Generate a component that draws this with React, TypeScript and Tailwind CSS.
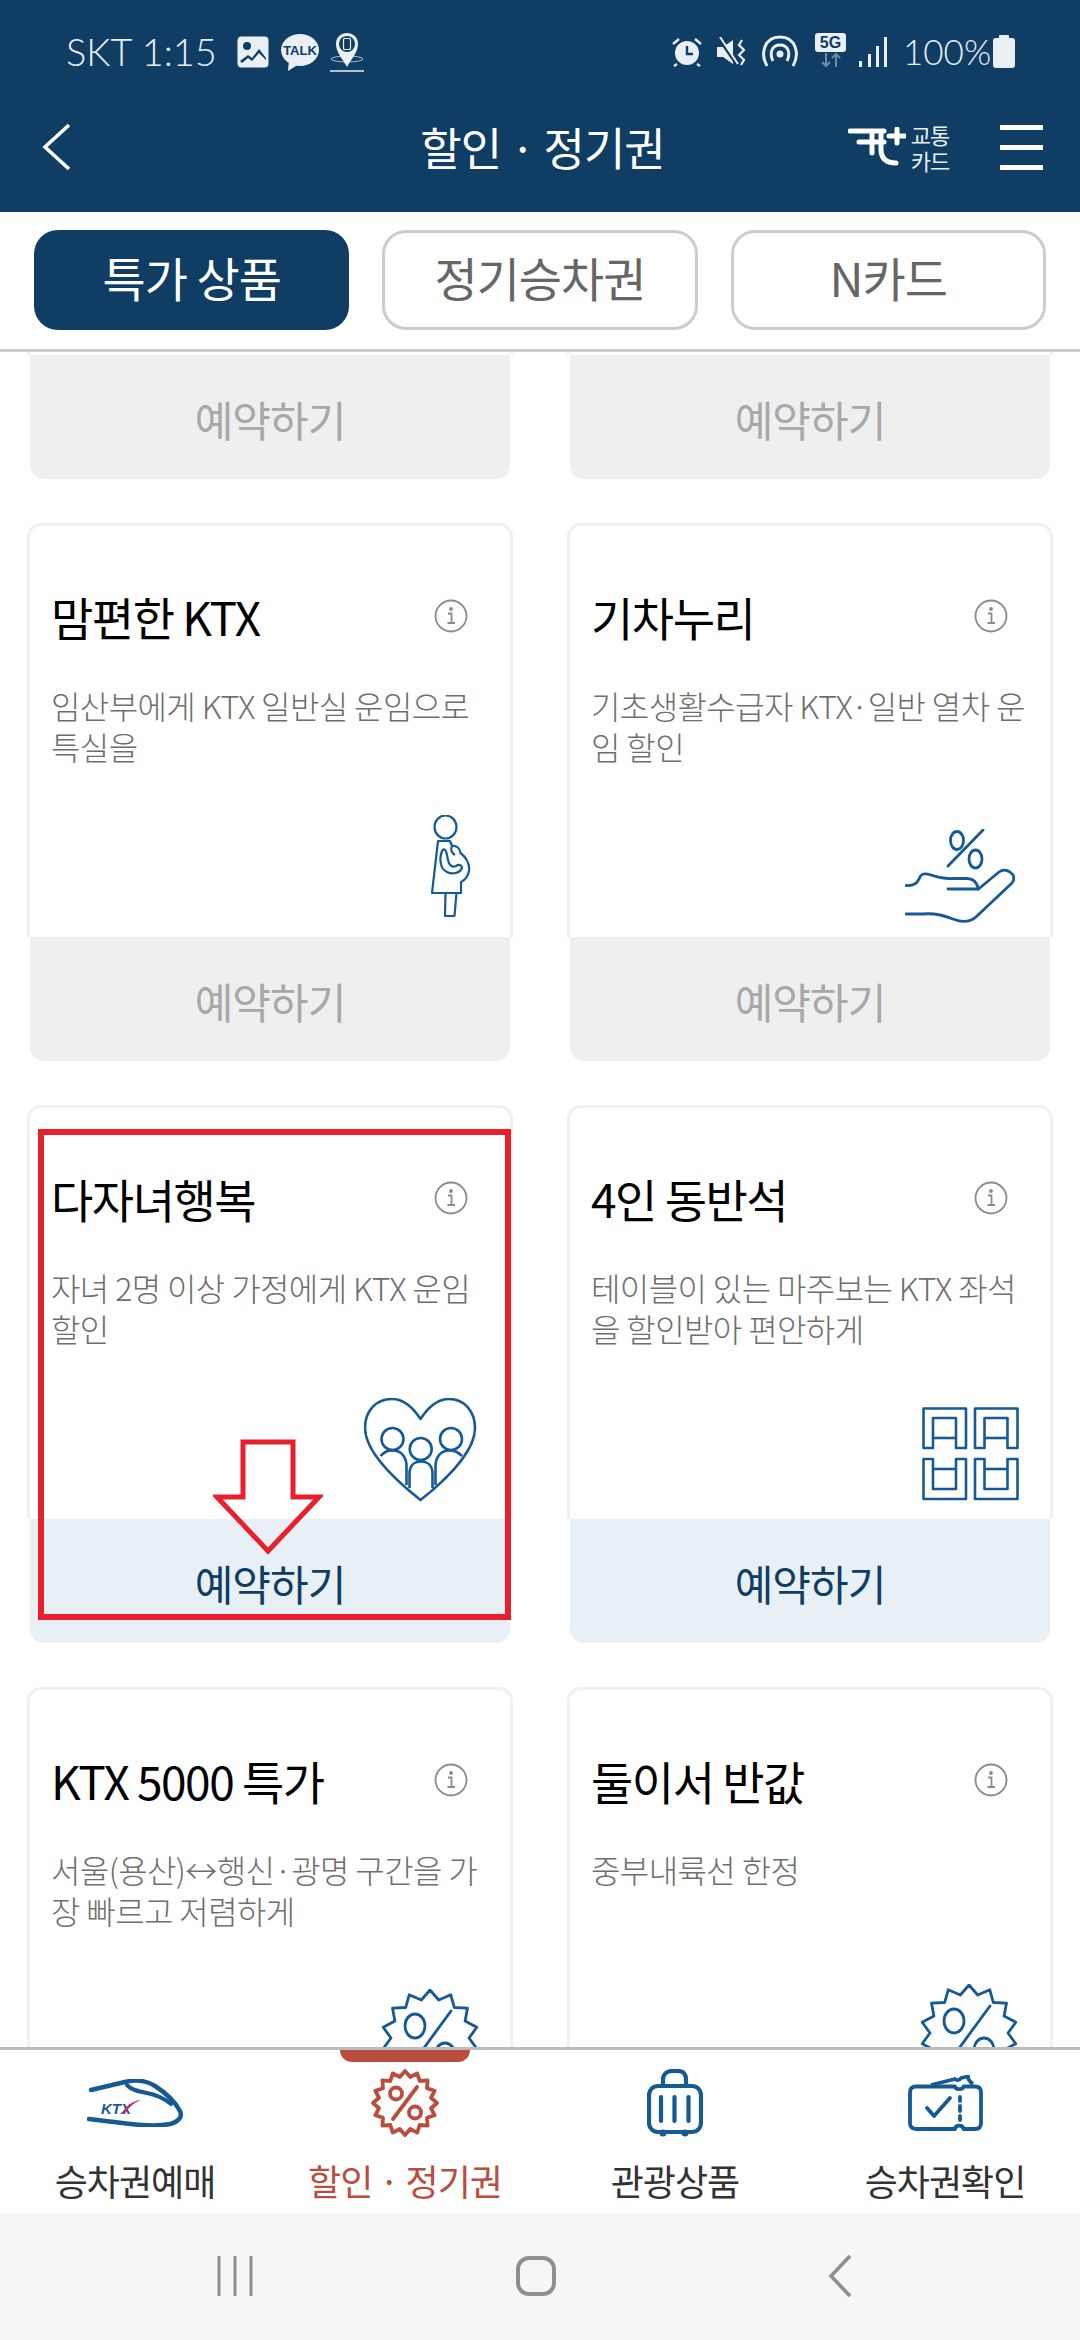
import React from 'react';

const KR = "font-['Noto_Sans_CJK_KR','Noto_Sans',sans-serif]";
const BLUE = '#155a94';

// star outline used by the discount badges
const starPoints = (n: number, cx: number, cy: number, r1: number, r2: number) =>
  Array.from({ length: n * 2 })
    .map((_, i) => {
      const r = i % 2 === 0 ? r1 : r2;
      const a = (Math.PI * i) / n - Math.PI / 2;
      return `${(cx + r * Math.cos(a)).toFixed(1)},${(cy + r * Math.sin(a)).toFixed(1)}`;
    })
    .join(' ');

const Pregnant = () => (
  <svg width="40" height="102" viewBox="0 0 40 102" fill="none" stroke={BLUE} strokeWidth="2.2" strokeLinejoin="round">
    <ellipse cx="14.5" cy="12" rx="11" ry="11.5" />
    <path d="M7 26H19L21 31C25 30 29 33 29.5 38C35 42 39 49 38 56C37 61 34 65 30 67V78H1Z" />
    <path d="M14 101H23.5L25.5 78H14.5Z" />
    <path d="M11 36C8 44 9 54 16 57C22 60 29 58 31 53C31 50 28 49 25 51C21 53 18 50 17 45C16 41 16 37 14 35C13 34 12 34 11 36Z" />
    <path d="M21 31C19 35 21 38 24 40" />
  </svg>
);

const HandPercent = () => (
  <svg width="110" height="94" viewBox="0 0 110 94" fill="none" stroke={BLUE} strokeWidth="2.8" strokeLinecap="round" strokeLinejoin="round">
    <ellipse cx="52" cy="11.5" rx="6.5" ry="9" />
    <ellipse cx="70.5" cy="30" rx="6.5" ry="9" />
    <path d="M78 1L43 37" />
    <path d="M1 56.5C8 57 12 55 14 50C16 44 20 44 26 46C34 49 40 50 48 49.5H62C68 49.5 72 54 73.5 60H43" />
    <path d="M73.5 60L94 43C98 40 102 41 105 43C109 46 110 50 107 54L72 87C66 93 58 94 48 90C38 86 28 84 18 85H1" />
  </svg>
);

const FamilyHeart = () => (
  <svg width="113" height="104" viewBox="0 0 113 104" fill="none" stroke={BLUE} strokeWidth="2.6" strokeLinejoin="round">
    <path d="M56.5 21C48 8 38 1 28 1C12 1 1 13 1 30C1 55 35 85 56.5 102C78 85 111 55 111 30C111 13 100 1 85 1C75 1 65 8 56.5 21Z" />
    <circle cx="28.5" cy="41" r="11" />
    <circle cx="87" cy="41" r="11" />
    <circle cx="56.7" cy="51" r="11" />
    <path d="M16.5 58C20 54 25 52 30 52.5C38 53 42.5 60 42.5 68V87" />
    <path d="M98 58C94 54 89 52 84 52.5C76 53 71.5 60 71.5 68V87" />
    <path d="M45.5 90V76C45.5 68 50 63.5 57 63.5C64 63.5 68.5 68 68.5 76V90" />
  </svg>
);

const Seats = () => (
  <svg width="97" height="94" viewBox="0 0 97 94" fill="none" stroke={BLUE} strokeWidth="2.6" strokeLinejoin="round">
    <path d="M1.5 1.5H44V41H34V11H11V41H1.5Z" />
    <path d="M11 31H34" />
    <path d="M53 1.5H95.5V41H85.5V11H62.5V41H53Z" />
    <path d="M62.5 31H85.5" />
    <path d="M1.5 52H11V82H34V52H44V92H1.5Z" />
    <path d="M11 62H34" />
    <path d="M53 52H62.5V82H85.5V52H95.5V92H53Z" />
    <path d="M62.5 62H85.5" />
  </svg>
);

const CardBadge = () => (
  <svg width="98" height="98" viewBox="0 0 98 98" fill="none" stroke={BLUE} strokeWidth="2.8" strokeLinejoin="round">
    <polygon points={starPoints(14, 49, 49, 48, 39)} />
    <ellipse cx="34" cy="37" rx="10" ry="12" />
    <ellipse cx="64" cy="66" rx="10" ry="12" />
    <path d="M70 22L29 78" strokeLinecap="round" />
  </svg>
);

const InfoIcon = () => (
  <svg width="34" height="34" viewBox="0 0 34 34" fill="none" stroke="#8a8a8a" strokeWidth="1.8">
    <circle cx="17" cy="17" r="15.5" />
    <path d="M14 14.5H17.5V24M13.5 24H21" />
    <circle cx="17" cy="10" r="1" fill="#8a8a8a" />
  </svg>
);

const TrainIcon = () => (
  <svg width="97" height="48" viewBox="0 0 97 48" fill="none">
    <path d="M4 11L40 2.5C50 0.5 60 2 68 7C79 14 88 23 93 32C96 38 91 43 83 45C70 47.5 50 46 35 44L2 40" stroke={BLUE} strokeWidth="4.5" strokeLinecap="round" strokeLinejoin="round" />
    <path d="M40 6C44 11 52 12.5 60 14C70 16 78 20 84 25" stroke={BLUE} strokeWidth="4" strokeLinecap="round" />
    <text x="14" y="35" fontFamily="'Liberation Sans',sans-serif" fontSize="15" fontWeight="700" fontStyle="italic" fill={BLUE}>KTX</text>
    <path d="M36 35C38 28 44 22 54 21C46 24 41 29 38 35Z" fill="#c0277f" />
  </svg>
);

const NavBadge = () => (
  <svg width="68" height="68" viewBox="0 0 68 68" fill="none" stroke="#b94d3e" strokeWidth="3.8" strokeLinejoin="round">
    <polygon points={starPoints(16, 34, 34, 32, 26.5)} />
    <circle cx="25" cy="24.5" r="6" />
    <circle cx="44" cy="43.5" r="6" />
    <path d="M46 18L22 50" strokeLinecap="round" />
  </svg>
);

const SuitcaseIcon = () => (
  <svg width="56" height="68" viewBox="0 0 56 68" fill="none" stroke={BLUE} strokeWidth="4.2">
    <path d="M16 16V11C16 5 20 2 25 2H31C36 2 39 5 39 11V16" />
    <rect x="2" y="17" width="52" height="46" rx="9" />
    <path d="M14 28V52M27.5 28V52M41.5 28V52" strokeLinecap="round" />
    <circle cx="16" cy="64" r="3.5" fill={BLUE} stroke="none" />
    <circle cx="38" cy="64" r="3.5" fill={BLUE} stroke="none" />
  </svg>
);

const TicketIcon = () => (
  <svg width="75" height="57" viewBox="0 0 75 57" fill="none" stroke={BLUE} strokeWidth="3.8" strokeLinejoin="round">
    <path d="M8 11.5H47C47.5 15 55 15 55.5 11.5H67C71 11.5 73 13.5 73 17.5V48C73 52 71 54 67 54H55.5C55 49.5 47.5 49.5 47 54H8C4 54 2 52 2 48V17.5C2 13.5 4 11.5 8 11.5Z" />
    <path d="M23 10L47 4C49 6 52 5 53 3L60 1.5C60 4 62 7 65 9" />
    <path d="M52 22V26M52 31V36M52 41V45" strokeLinecap="round" />
    <path d="M19 33L26 41L42 23" strokeLinecap="round" />
  </svg>
);

const Card = ({ title, lines, active, icon, iconClass, noButton, children }: {
  title?: string;
  lines?: string[];
  active?: boolean;
  icon?: React.ReactNode;
  iconClass?: string;
  noButton?: boolean; // last row sits under the bottom nav
  children?: React.ReactNode;
}) => (
  <div className="relative">
    <div className="h-[414px] flex flex-col bg-white border-x-[3px] border-t-[3px] border-[#f0f0f0] rounded-t-[14px] pl-[21px] pr-[42px] pt-[62px]">
      {title && (
        <div className="flex justify-between items-center h-[56px]">
          <span className="text-[#000] text-[46px] tracking-[-1.5px] whitespace-nowrap">{title}</span>
          <InfoIcon />
        </div>
      )}
      {lines && (
        <div className="mt-[41px] text-[#6e6e6e] text-[32px] font-light leading-[41px] tracking-[-0.6px] whitespace-nowrap">
          {lines.map(l => <div key={l}>{l}</div>)}
        </div>
      )}
      {icon && <div className={`mt-auto self-end ${iconClass}`}>{icon}</div>}
    </div>
    {!noButton && (
      <div className={`h-[124px] mx-[3px] pt-[3px] rounded-b-[14px] flex items-center justify-center text-[42px] tracking-[-1px] ${active ? 'bg-[#e9f0f5] text-[#0f3d63]' : 'bg-[#efefef] text-[#a8a8a8]'}`}>
        예약하기
      </div>
    )}
    {children}
  </div>
);

const NavItem = ({ label, active, icon }: { label: string; active?: boolean; icon: React.ReactNode }) => (
  <div className="relative flex flex-col items-center">
    {active && <div className="absolute top-0 w-[130px] h-[12px] bg-[#b94d3e] rounded-b-[12px]" />}
    <div className="h-[90px] mt-[8px] flex items-center justify-center">{icon}</div>
    <span className={`mt-[7px] text-[36px] leading-[50px] tracking-[-1px] whitespace-nowrap ${active ? 'text-[#b94d3e]' : 'text-[#333]'}`}>{label}</span>
  </div>
);

export default function App() {
  return (
    <div className={`w-[1080px] h-[2340px] flex flex-col overflow-hidden bg-white ${KR}`}>
      {/* App header with status bar */}
      <header className="h-[212px] shrink-0 bg-[#0f3d63] text-[#e9eff5] flex flex-col">
        <div className="h-[104px] pl-[66px] pr-[65px] pt-[31px] flex justify-between">
          <div className="flex items-start">
            <span className="font-['Lato',sans-serif] font-light text-[38px] leading-[40px] w-[171px] whitespace-nowrap">SKT 1:15</span>
            <svg width="32" height="32" viewBox="0 0 32 32" className="mt-[5px]">
              <rect width="31" height="31" x="0.5" y="0.5" rx="4" fill="#e9eff5" />
              <circle cx="10" cy="10" r="4" fill="#0f3d63" />
              <path d="M3 25L11 19L15 22L22 13L29 22V24L22 17L15 25L11 22L5 27Z" fill="#0f3d63" />
            </svg>
            <svg width="38" height="38" viewBox="0 0 38 38" className="ml-[12px] mt-[3px]">
              <ellipse cx="19" cy="16" rx="19" ry="16" fill="#e9eff5" />
              <path d="M8 26L7 37L18 30Z" fill="#e9eff5" />
              <text x="19" y="21" textAnchor="middle" fontSize="13" fontWeight="700" fontFamily="'Liberation Sans',sans-serif" fill="#0f3d63">TALK</text>
            </svg>
            <svg width="36" height="40" viewBox="0 0 36 40" className="ml-[10px] mt-[1px]">
              <path d="M18 35C13 26 7 20 7 12C7 5 12 1 18 1C24 1 29 5 29 12C29 20 23 26 18 35Z" fill="#e9eff5" />
              <circle cx="18" cy="12" r="8" fill="#0f3d63" />
              <rect x="14.5" y="6.5" width="7" height="11" rx="1" fill="none" stroke="#e9eff5" strokeWidth="1.2" />
              <ellipse cx="18" cy="27" rx="16" ry="3" fill="none" stroke="#e9eff5" strokeWidth="1" opacity="0.7" />
              <path d="M1 39H35" stroke="#e9eff5" strokeWidth="1.6" />
            </svg>
          </div>
          <div className="flex items-start">
            <svg width="30" height="30" viewBox="0 0 30 30" className="mt-[6px]">
              <circle cx="15" cy="16" r="12" fill="#e9eff5" />
              <path d="M15 9V17H21" stroke="#0f3d63" strokeWidth="2.4" fill="none" />
              <path d="M1 7L7 2M29 7L23 2M5 27L2 29M25 27L28 29" stroke="#e9eff5" strokeWidth="2.4" />
            </svg>
            <svg width="30" height="30" viewBox="0 0 30 30" className="ml-[15px] mt-[6px]">
              <path d="M0 10H6L16 3V27L6 20H0Z" fill="#e9eff5" />
              <path d="M2 2L20 28" stroke="#0f3d63" strokeWidth="3" />
              <path d="M3 0L21 27" stroke="#e9eff5" strokeWidth="2" />
              <path d="M25 3L22 8L27 13L22 18L27 23L24 28" stroke="#e9eff5" strokeWidth="2.2" fill="none" />
            </svg>
            <svg width="38" height="32" viewBox="0 0 38 32" className="ml-[14px] mt-[4px]" fill="none" stroke="#e9eff5" strokeWidth="3">
              <path d="M6 31C-1 19 3 2 19 2C35 2 39 19 32 31" />
              <path d="M12 26C8 18 11 10 19 10C27 10 30 18 26 26" />
              <circle cx="19" cy="19" r="3.5" fill="#e9eff5" stroke="none" />
            </svg>
            <div className="ml-[16px] mt-[2px] w-[31px] flex flex-col items-center">
              <div className="w-[31px] h-[19px] rounded-[3px] bg-[#e9eff5] text-[#0f3d63] text-[16px] leading-[19px] font-bold text-center font-['Liberation_Sans',sans-serif]">5G</div>
              <svg width="24" height="16" viewBox="0 0 24 16" fill="none" stroke="#6f8ba3" strokeWidth="2">
                <path d="M7 1V14M3 10L7 14L11 10M17 15V2M13 6L17 2L21 6" />
              </svg>
            </div>
            <svg width="29" height="30" viewBox="0 0 29 30" className="ml-[13px] mt-[6px]" fill="#e9eff5">
              <rect x="0" y="24" width="3" height="6" />
              <rect x="9" y="17" width="3" height="13" />
              <rect x="17" y="9" width="3" height="21" />
              <rect x="25" y="0" width="3" height="30" />
            </svg>
            <span className="ml-[15px] font-['Lato',sans-serif] font-light text-[35px] leading-[40px] w-[90px] whitespace-nowrap">100%</span>
            <svg width="22" height="33" viewBox="0 0 22 33" className="mt-[4px]" fill="#e9eff5">
              <rect x="6" y="0" width="10" height="4" rx="1" />
              <rect x="0" y="3" width="22" height="30" rx="3" />
            </svg>
          </div>
        </div>
        <div className="flex-1 pl-[42px] pr-[37px] pb-[22px] grid grid-cols-[1fr_auto_1fr] items-center">
          <svg width="30" height="48" viewBox="0 0 30 48" fill="none" stroke="#fff" strokeWidth="3.6">
            <path d="M27 2L3 24L27 46" />
          </svg>
          <h1 className="text-white text-[45px] tracking-[-1px] whitespace-nowrap">할인 · 정기권</h1>
          <div className="flex items-center justify-end">
            <svg width="58" height="40" viewBox="0 0 58 40" fill="none" stroke="#fff" strokeWidth="5" strokeLinecap="round">
              <path d="M2 4H36M11 15H36M24 5V26M33 5V22C33 31 38 36 48 36" />
              <path d="M41 9H57M49 2V16" />
            </svg>
            <div className="ml-[1px] w-[46px] text-[22px] leading-[26px] tracking-[-1px] text-center text-[#e9eff5]">
              <div>교통</div>
              <div>카드</div>
            </div>
            <div className="ml-[47px] w-[43px] flex flex-col gap-[15px]">
              <div className="h-[5px] bg-white" />
              <div className="h-[5px] bg-white" />
              <div className="h-[5px] bg-white" />
            </div>
          </div>
        </div>
      </header>

      {/* Tabs */}
      <div className="h-[140px] shrink-0 border-b-[3px] border-[#cccccc] grid grid-cols-3 gap-x-[33px] px-[34px] pt-[18px]">
        <div className="h-[100px] pb-[5px] rounded-[24px] bg-[#0f3d63] text-white text-[47px] tracking-[-1px] flex items-center justify-center">특가 상품</div>
        <div className="h-[100px] pb-[5px] rounded-[24px] border-[3px] border-[#cccccc] text-[#666] text-[47px] tracking-[-1px] flex items-center justify-center">정기승차권</div>
        <div className="h-[100px] pb-[5px] rounded-[24px] border-[3px] border-[#cccccc] text-[#666] text-[47px] tracking-[-1px] flex items-center justify-center">N카드</div>
      </div>

      {/* Product list, scrolled */}
      <div className="flex-1 min-h-0 overflow-hidden">
        <div className="-mt-[411px] grid grid-cols-[486px_486px] gap-x-[54px] gap-y-[44px] pl-[27px]">
          <Card />
          <Card />
          <Card title="맘편한 KTX" lines={['임산부에게 KTX 일반실 운임으로', '특실을']} icon={<Pregnant />} iconClass="mb-[20px] -mr-[3px]" />
          <Card title="기차누리" lines={['기초생활수급자 KTX·일반 열차 운', '임 할인']} icon={<HandPercent />} iconClass="mb-[14px] -mr-[7px]" />
          <Card title="다자녀행복" lines={['자녀 2명 이상 가정에게 KTX 운임', '할인']} active icon={<FamilyHeart />} iconClass="mb-[17px] -mr-[9px]">
            <div className="absolute left-[11px] top-[24px] w-[473px] h-[491px] border-[6px] border-[#e8202e]" />
            <svg width="110" height="116" viewBox="0 0 110 116" fill="none" stroke="#e8202e" strokeWidth="5" className="absolute left-[186px] top-[334px]">
              <path d="M30 3H80V58H106L55 112L4 58H30Z" />
            </svg>
          </Card>
          <Card title="4인 동반석" lines={['테이블이 있는 마주보는 KTX 좌석', '을 할인받아 편안하게']} active icon={<Seats />} iconClass="mb-[18px] -mr-[11px]" />
          <Card title="KTX 5000 특가" lines={['서울(용산)↔행신·광명 구간을 가', '장 빠르고 저렴하게']} noButton icon={<CardBadge />} iconClass="mb-[14px] -mr-[11px]" />
          <Card title="둘이서 반값" lines={['중부내륙선 한정']} noButton icon={<CardBadge />} iconClass="mb-[19px] -mr-[10px]" />
        </div>
      </div>

      {/* Bottom navigation */}
      <nav className="h-[167px] shrink-0 relative z-10 bg-white border-t-[3px] border-[#bbbbbb] grid grid-cols-4">
        <NavItem label="승차권예매" icon={<TrainIcon />} />
        <NavItem label="할인 · 정기권" active icon={<NavBadge />} />
        <NavItem label="관광상품" icon={<SuitcaseIcon />} />
        <NavItem label="승차권확인" icon={<TicketIcon />} />
      </nav>

      {/* Android navigation bar */}
      <div className="h-[126px] shrink-0 bg-[#f6f6f6] flex items-center pb-[2px] pl-[217px]">
        <svg width="36" height="40" viewBox="0 0 36 40" stroke="#8f8f8f" strokeWidth="3">
          <path d="M2 0V40M18 0V40M34 0V40" />
        </svg>
        <div className="ml-[263px] w-[40px] h-[40px] rounded-[13px] border-[4px] border-[#8f8f8f]" />
        <svg width="24" height="42" viewBox="0 0 24 42" fill="none" stroke="#8f8f8f" strokeWidth="3.6" className="ml-[272px]">
          <path d="M22 1L3 21L22 41" />
        </svg>
      </div>
    </div>
  );
}
